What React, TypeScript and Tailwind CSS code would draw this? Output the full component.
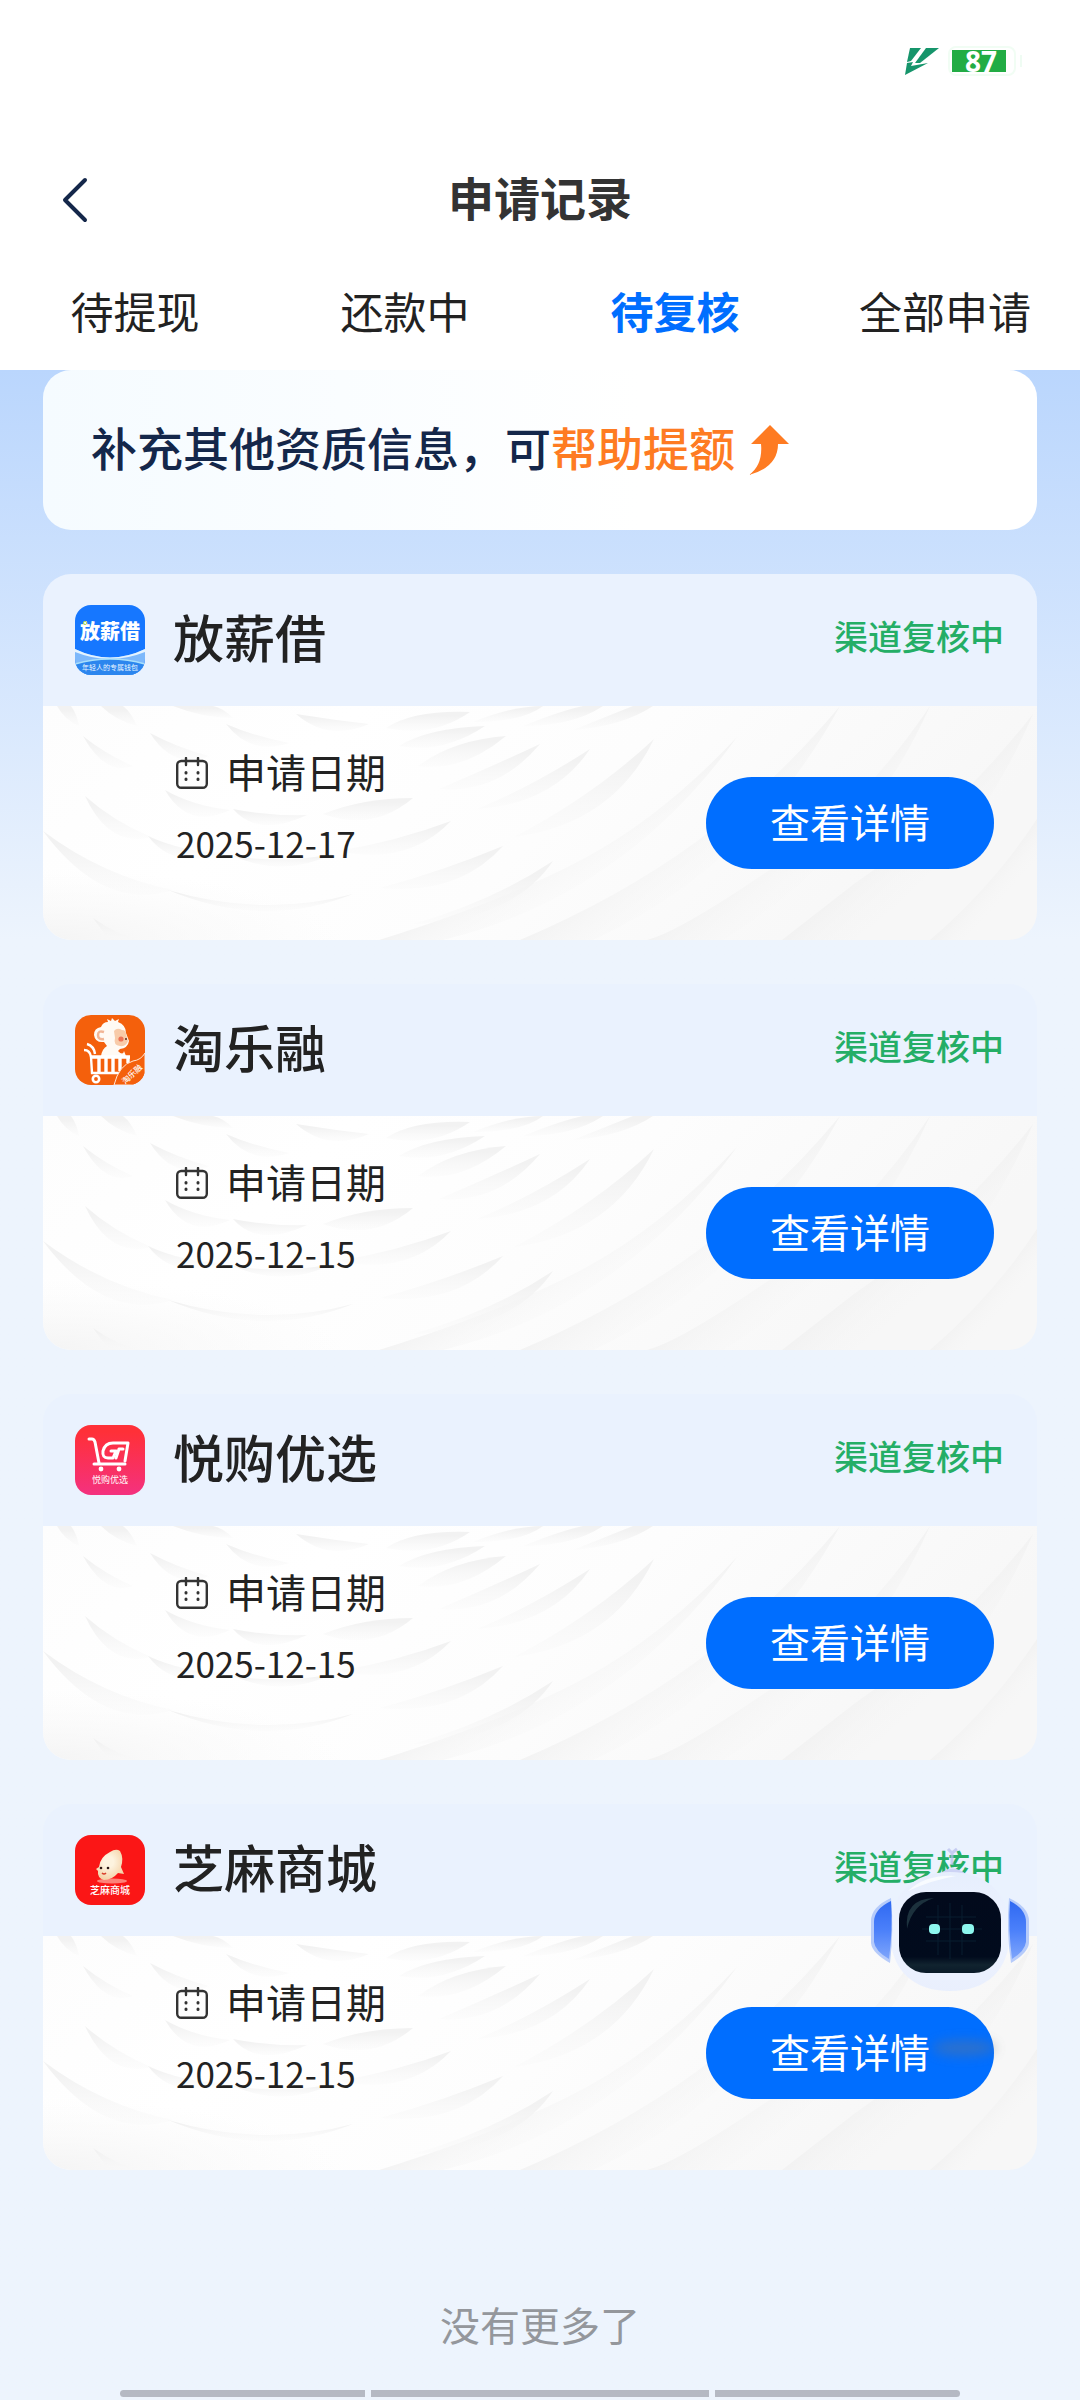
import React, { useId, useState } from "react";

type Application = {
  id: number;
  name: string;
  date: string;
  status: string;
  logo: React.ReactNode;
};

const tabs = ["待提现", "还款中", "待复核", "全部申请"];

// Shadows under the overlapping scales of the card texture
const scales = [
  "M40 30Q62 48 90 60Q62 70 40 30Z",
  "M107 27Q135 42 166 50Q130 64 107 27Z",
  "M183 18Q210 30 246 37Q208 50 183 18Z",
  "M253 8Q290 14 326 18Q285 36 253 8Z",
  "M343 22Q370 4 427 6Q390 32 343 22Z",
  "M356 40Q385 22 442 20Q400 48 356 40Z",
  "M375 60Q410 34 463 30Q420 66 375 60Z",
  "M396 83Q450 60 497 38Q455 88 396 83Z",
  "M434 103Q490 80 547 43Q510 98 434 103Z",
  "M471 131Q550 90 611 33Q570 118 471 131Z",
  "M122 84Q150 100 187 104Q145 124 122 84Z",
  "M190 103Q225 110 264 109Q215 132 190 103Z",
  "M280 108Q320 92 370 92Q330 126 280 108Z",
  "M42 90Q70 115 108 131Q66 142 42 90Z",
  "M105 130Q140 146 180 147Q130 164 105 130Z",
  "M190 150Q240 158 290 148Q240 172 190 150Z",
  "M295 145Q355 135 408 115Q365 160 295 145Z",
  "M337 182Q400 165 460 140Q415 190 337 182Z",
  "M125 184Q220 212 310 188Q220 224 125 184Z",
  "M0 125Q60 170 130 184Q60 206 0 125Z",
  "M370 218Q450 195 510 155Q470 214 370 218Z",
  "M50 212Q75 230 100 234H66Z",
  "M14 0Q22 14 36 20Q34 8 28 0Z",
  "M58 0Q72 14 94 20Q88 6 80 0Z",
  "M130 0Q160 12 190 12Q180 2 170 0Z",
  "M430 16Q470 0 500 0Q480 16 430 16Z",
  "M480 20Q520 4 540 0H560Q530 20 480 20Z",
  "M530 24Q570 8 590 0H610Q580 20 530 24Z",
];

// Long diagonal folds on the right half
const bands = [
  "M694 31Q620 110 542 152T336 234H400Q580 190 694 31Z",
  "M797 0Q730 80 653 136T477 234H550Q710 160 797 0Z",
  "M887 0Q820 100 728 163T604 234H680Q820 150 887 0Z",
  "M990 8Q910 110 811 178L739 234H810Q930 150 990 8Z",
  "M994 113Q950 180 887 234H950Q980 200 994 170Z",
];

function CardTexture() {
  const id = useId();

  return (
    <svg
      className="absolute inset-0 h-full w-full"
      viewBox="0 0 994 234"
      preserveAspectRatio="none"
      aria-hidden="true"
    >
      <defs>
        <linearGradient id={`${id}base`} x1="0" y1="0" x2="1" y2="0.25">
          <stop offset="0" stopColor="#fdfdfd" />
          <stop offset="0.3" stopColor="#ffffff" />
          <stop offset="0.6" stopColor="#fdfdfd" />
          <stop offset="1" stopColor="#f7f7f7" />
        </linearGradient>
        <linearGradient id={`${id}scale`} x1="0" y1="0" x2="0" y2="1">
          <stop offset="0.2" stopColor="#f2f2f2" />
          <stop offset="1" stopColor="#f8f8f8" stopOpacity="0.3" />
        </linearGradient>
        <linearGradient id={`${id}band`} x1="0" y1="0" x2="1" y2="1">
          <stop offset="0.45" stopColor="#efefef" />
          <stop offset="0.7" stopColor="#f8f8f8" stopOpacity="0" />
        </linearGradient>
        <radialGradient id={`${id}corner`} cx="0" cy="1" r="0.3">
          <stop offset="0" stopColor="#f4f4f4" />
          <stop offset="1" stopColor="#f8f8f8" stopOpacity="0" />
        </radialGradient>
      </defs>
      <rect width="994" height="234" fill={`url(#${id}base)`} />
      <rect width="994" height="234" fill={`url(#${id}corner)`} />
      {bands.map((d) => (
        <path key={d} d={d} fill={`url(#${id}band)`} />
      ))}
      {scales.map((d) => (
        <path key={d} d={d} fill={`url(#${id}scale)`} />
      ))}
    </svg>
  );
}

function SalaryLogo() {
  return (
    <svg className="h-full w-full" viewBox="0 0 70 70">
      <rect width="70" height="70" fill="#1677ff" />
      <path d="M0 44Q35 61 70 44V70H0Z" fill="#7db8fb" />
      <path d="M0 44Q35 61 70 44V47Q35 61 0 47Z" fill="#e4f3ff" />
      <path d="M0 59Q35 49 70 59V70H0Z" fill="#2c86ee" />
      <path d="M0 59Q35 49 70 59" fill="none" stroke="#a9e0fb" strokeWidth="1.5" />
      <text x="35" y="34" textAnchor="middle" fontSize="20" fontWeight="900" fill="#fff">
        放薪借
      </text>
      <circle cx="10" cy="18" r="1.6" fill="none" stroke="#b9d94a" />
      <text x="35" y="65" textAnchor="middle" fontSize="7" fill="#e8f5ff">
        年轻人的专属钱包
      </text>
    </svg>
  );
}

function MonkeyLogo() {
  return (
    <svg className="h-full w-full" viewBox="0 0 70 70">
      <rect width="70" height="70" fill="#f4600c" />
      <path
        d="M26 12Q28 7 33 7L32 4L36 6L37 3L40 6L44 4L43 7Q51 10 51 18L54 26Q53 33 45 34L43 36Q48 41 49 36L51 41H26Q27 34 32 31L29 27Q20 28 19 20Q19 13 26 12Z"
        fill="#fffaf4"
      />
      <path d="M29 17Q23 15 23 20Q23 25 29 24" fill="none" stroke="#f2b595" strokeWidth="2.5" />
      <path d="M39 16Q42 12 47 15Q51 15 51 19L53 26Q51 32 45 31Q38 30 40 23Z" fill="#f8cba9" />
      <circle cx="46" cy="24" r="2.6" fill="#ee7457" />
      <circle cx="51" cy="24" r="1" fill="#5a2a19" />
      <path d="M9 35Q15 35 16 42L17 58H46" fill="none" stroke="#fff" strokeWidth="2.4" />
      <path d="M12 29Q19 31 20 39" fill="none" stroke="#fff" strokeWidth="2.4" />
      <path
        d="M15 42H55M24 42V58M31 42V58M38 42V58M45 42V56M53 42V48"
        fill="none"
        stroke="#fff"
        strokeWidth="3.4"
      />
      <circle cx="21" cy="64" r="3.2" fill="#f4600c" stroke="#fff" strokeWidth="2.6" />
      <path d="M39 70Q44 50 58 46Q66 45 70 38V70Z" fill="#f4600c" stroke="#ffe6d6" />
      <text
        x="57"
        y="62"
        textAnchor="middle"
        fontSize="8"
        fontWeight="500"
        fill="#fff"
        transform="rotate(-43 57 59)"
      >
        淘乐融
      </text>
    </svg>
  );
}

function CartLogo() {
  return (
    <svg className="h-full w-full" viewBox="0 0 70 70">
      <defs>
        <linearGradient id="cart-bg" x1="0" y1="0" x2="0" y2="1">
          <stop offset="0.1" stopColor="#ff3038" />
          <stop offset="1" stopColor="#f4317f" />
        </linearGradient>
      </defs>
      <rect width="70" height="70" fill="url(#cart-bg)" />
      <g fill="none" stroke="#fff" strokeWidth="3" strokeLinecap="round" strokeLinejoin="round">
        <path d="M14 14H17Q19 14 20 17L24 38" />
        <path d="M19 39H50" />
        <path d="M50 36L53 18H38Q30 18 28 26Q27 33 33 33H38L41 26H36" />
        <path d="M48 24H44L41 33" />
      </g>
      <circle cx="26" cy="44" r="2.4" fill="#fff" />
      <circle cx="44" cy="44" r="2.4" fill="#fff" />
      <text x="35" y="58" textAnchor="middle" fontSize="9" fill="#fff">
        悦购优选
      </text>
    </svg>
  );
}

function SesameLogo() {
  return (
    <svg className="h-full w-full" viewBox="0 0 70 70">
      <defs>
        <radialGradient id="sesame-body" cx="0.45" cy="0.4" r="0.6">
          <stop offset="0.3" stopColor="#fdf3df" />
          <stop offset="1" stopColor="#f4d3a8" />
        </radialGradient>
      </defs>
      <rect width="70" height="70" fill="#fb1616" />
      <ellipse cx="37" cy="46" rx="15" ry="2.5" fill="#fd8278" />
      <path
        d="M45 16Q49 23 46 32L49 39L43 38Q37 45 29 45Q22 43 23 36L21 34L24 32Q25 22 35 17Q41 13 45 16Z"
        fill="url(#sesame-body)"
      />
      <circle cx="26" cy="33" r="1.3" fill="#2b1714" />
      <circle cx="33" cy="33" r="1.3" fill="#2b1714" />
      <path d="M27 38Q29 40 31 38" fill="none" stroke="#d8402c" strokeWidth="1.5" />
      <text x="35" y="59" textAnchor="middle" fontSize="10" fontWeight="500" fill="#fff">
        芝麻商城
      </text>
    </svg>
  );
}

const applications: Application[] = [
  { id: 1, name: "放薪借", date: "2025-12-17", status: "渠道复核中", logo: <SalaryLogo /> },
  { id: 2, name: "淘乐融", date: "2025-12-15", status: "渠道复核中", logo: <MonkeyLogo /> },
  { id: 3, name: "悦购优选", date: "2025-12-15", status: "渠道复核中", logo: <CartLogo /> },
  { id: 4, name: "芝麻商城", date: "2025-12-15", status: "渠道复核中", logo: <SesameLogo /> },
];

function StatusBar() {
  return (
    <div className="flex h-[122px] items-center justify-end gap-2 pr-[58px]">
      <svg className="h-7 w-9" viewBox="0 0 36 28" aria-hidden="true">
        <path d="M6 1H17L7 14L3 15Z" fill="#16956b" />
        <path d="M22 1H35L16 16H11Z" fill="#16956b" />
        <path d="M3 16L9 15L7 19L24 16L1 28Z" fill="#16956b" />
      </svg>
      <div className="flex items-center gap-1">
        <div className="rounded-lg border-2 border-[#f1fdf4] py-[2px] pl-[2px] pr-2">
          <div className="flex h-[22px] w-[54px] items-center justify-center bg-[#22ac44] pl-1 font-['Open_Sans',sans-serif] text-[28px] font-bold leading-none text-white">
            87
          </div>
        </div>
        <div className="h-3 w-[2px] bg-[#effcf3]" />
      </div>
    </div>
  );
}

function CalendarIcon() {
  return (
    <svg
      className="mt-1 h-8 w-8"
      viewBox="0 0 32 32"
      fill="none"
      stroke="#333"
      strokeWidth="2.4"
      strokeLinecap="round"
      aria-hidden="true"
    >
      <rect x="1.200" y="4" width="29.600" height="26.800" rx="4" />
      <path d="M10 1V8M22 1V8" />
      <path d="M10 15.500V16M22 15.500V16M10 22V22.500M22 22V22.500" strokeWidth="3" />
    </svg>
  );
}

function ApplicationCard({ application }: { application: Application }) {
  return (
    <article className="overflow-hidden rounded-[28px] bg-[#eaf2fe]">
      <header className="flex h-[132px] items-center pl-8 pr-[33px]">
        <div className="h-[70px] w-[70px] overflow-hidden rounded-2xl">{application.logo}</div>
        <h2 className="ml-7 flex-1 pb-2 text-[51px] font-medium leading-[64px] text-[#222]">
          {application.name}
        </h2>
        <span className="pb-2 text-[34px] font-medium leading-[48px] text-[#24ae66]">
          {application.status}
        </span>
      </header>
      <div className="relative h-[234px]">
        <CardTexture />
        <div className="relative flex h-full items-center justify-between pl-[133px] pr-[43px]">
          <dl className="flex flex-col gap-4 pb-8 text-[#222]">
            <dt className="flex items-center gap-[18px] text-[40px] leading-[56px]">
              <CalendarIcon />
              申请日期
            </dt>
            <dd className="text-[35px] leading-[56px]">{application.date}</dd>
          </dl>
          <button
            type="button"
            className="h-[92px] w-[288px] rounded-full bg-[#006eff] pb-1 text-[40px] leading-[56px] text-white"
          >
            查看详情
          </button>
        </div>
      </div>
    </article>
  );
}

function AssistantButton() {
  return (
    <button
      type="button"
      aria-label="智能客服"
      className="fixed bottom-[325px] right-[50px] h-[230px] w-[160px]"
    >
      <svg className="h-full w-full" viewBox="0 0 160 230">
        <defs>
          <linearGradient id="bot-ear" x1="0" y1="0" x2="0" y2="1">
            <stop offset="0" stopColor="#2f69f2" />
            <stop offset="0.500" stopColor="#4b80fa" />
            <stop offset="1" stopColor="#7ea5fb" />
          </linearGradient>
          <linearGradient id="bot-head" x1="0" y1="0" x2="0" y2="1">
            <stop offset="0" stopColor="#e6eefd" />
            <stop offset="0.500" stopColor="#eef3ff" />
            <stop offset="1" stopColor="#e9effd" />
          </linearGradient>
          <linearGradient id="bot-face" x1="0" y1="0" x2="0" y2="1">
            <stop offset="0" stopColor="#020a1c" />
            <stop offset="0.800" stopColor="#010b1d" />
            <stop offset="0.900" stopColor="#11232f" />
            <stop offset="1" stopColor="#0a1a28" />
          </linearGradient>
          <filter id="bot-blur" x="-40%" y="-80%" width="180%" height="260%">
            <feGaussianBlur stdDeviation="6" />
          </filter>
        </defs>
        <ellipse cx="94" cy="203" rx="32" ry="8" fill="#6f7680" opacity="0.4" filter="url(#bot-blur)" />
        <path d="M78 4L82 8L87 4M82 8V20" fill="none" stroke="#b7bdec" strokeWidth="3" opacity="0.7" />
        <path d="M70 29Q82 18 96 29Z" fill="#cdd3f5" />
        <path
          d="M80 27C116 27 140 48 140 86C140 126 116 146 80 146C44 146 20 126 20 86C20 48 44 27 80 27Z"
          fill="url(#bot-head)"
        />
        <path d="M38 46Q56 29 86 31Q62 35 38 46Z" fill="#f8fbff" />
        <path d="M21 53Q1 62 1 76V98Q2 108 20 118Q24 84 21 53Z" fill="#b6cbfa" />
        <path d="M21 56Q4 64 4 77V97Q5 106 19 114Q23 84 21 56Z" fill="url(#bot-ear)" />
        <path d="M139 53Q159 62 159 76V98Q158 108 141 118Q136 84 139 53Z" fill="#b6cbfa" />
        <path d="M140 56Q156 64 156 77V97Q155 106 142 114Q138 84 140 56Z" fill="url(#bot-ear)" />
        <rect x="29" y="47" width="102" height="81" rx="27" fill="url(#bot-face)" />
        <path
          d="M56 72H106M52 84H112M56 96H106M68 60V110M80 58V114M92 60V110"
          stroke="#0d2a3c"
          strokeWidth="1"
          opacity="0.6"
        />
        <path d="M37 84Q34 54 64 53Q42 60 37 84Z" fill="#1c313d" />
        <rect x="59" y="79" width="11" height="10" rx="4" fill="#8df7ee" />
        <rect x="92" y="79" width="12" height="10" rx="4" fill="#8df7ee" />
      </svg>
    </button>
  );
}

export default function App() {
  const [activeTab, setActiveTab] = useState("待复核");

  return (
    <div
      lang="zh-CN"
      className="flex min-h-screen flex-col bg-[#edf4fd] font-['Noto_Sans_CJK_SC',sans-serif]"
    >
      <div className="bg-white">
        <StatusBar />
        <header className="grid h-[156px] grid-cols-[1fr_auto_1fr] items-center px-[58px]">
          <button type="button" aria-label="返回" className="h-12 w-9">
            <svg className="h-full w-full" viewBox="0 0 36 48" fill="none" aria-hidden="true">
              <path
                d="M27 4L7 24L27 44"
                stroke="#14274a"
                strokeWidth="4"
                strokeLinecap="round"
                strokeLinejoin="round"
              />
            </svg>
          </button>
          <h1 className="pb-2 text-[46px] font-bold leading-[64px] text-[#333]">申请记录</h1>
        </header>
        <nav className="grid h-[92px] grid-cols-4 pb-[30px]">
          {tabs.map((tab) => (
            <button
              key={tab}
              type="button"
              onClick={() => setActiveTab(tab)}
              className={`text-[43px] leading-[64px] ${
                activeTab === tab ? "font-bold text-[#006eff]" : "text-[#222]"
              }`}
            >
              {tab}
            </button>
          ))}
        </nav>
      </div>

      <main className="flex flex-1 flex-col gap-11 bg-linear-to-b from-[#bad6fd] to-[#edf4fd] to-[570px] px-[43px]">
        <a
          href="#profile"
          className="flex h-40 items-center gap-[14px] rounded-[28px] bg-linear-to-r from-[#f5fbff] to-white to-60% pl-12 text-[46px] font-medium leading-[64px] text-[#14274a]"
        >
          <span className="pb-2">
            补充其他资质信息，可<span className="text-[#fe7b22]">帮助提额</span>
          </span>
          <svg className="h-[50px] w-10" viewBox="0 0 40 50" aria-hidden="true">
            <path d="M21 0L40 19H29Q29 42 0 50Q14 40 12 19H2Z" fill="#fe7b22" />
          </svg>
        </a>

        {applications.map((application) => (
          <ApplicationCard key={application.id} application={application} />
        ))}

        <p className="mt-[78px] text-center text-[40px] leading-[64px] text-[#94979c]">
          没有更多了
        </p>
      </main>

      {/* System gesture bar */}
      <div className="flex gap-[6px] px-[120px] pb-[3px]">
        <div className="h-[7px] w-[245px] rounded-l-full bg-[#b5b9c3]" />
        <div className="h-[7px] flex-1 bg-[#b5b9c3]" />
        <div className="h-[7px] w-[245px] rounded-r-full bg-[#b5b9c3]" />
      </div>

      <AssistantButton />
    </div>
  );
}
